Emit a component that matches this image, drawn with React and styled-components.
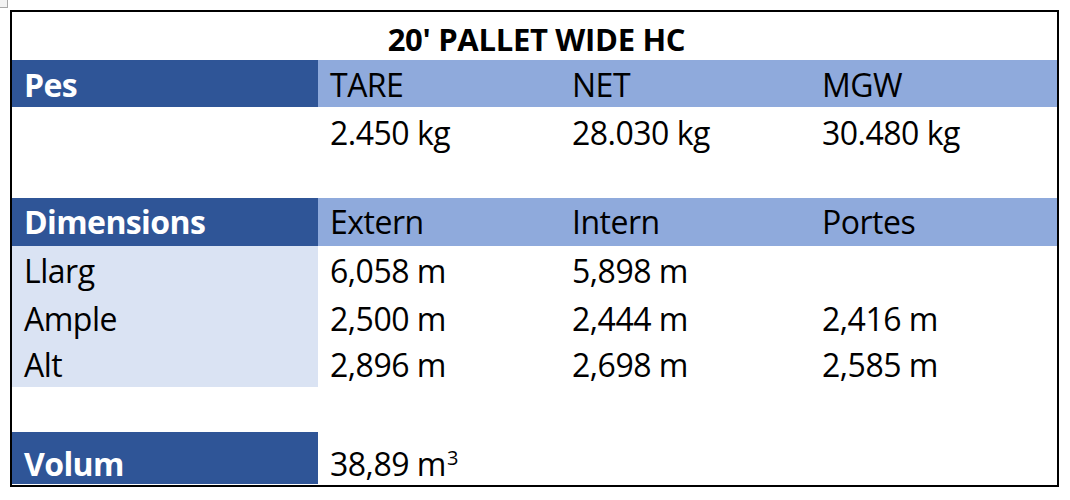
import React from "react";
import styled, { createGlobalStyle } from "styled-components";

const GlobalStyle = createGlobalStyle`
  html, body {
    margin: 0;
    padding: 0;
    background: #ffffff;
  }
  body {
    font-family: "Open Sans", "Liberation Sans", sans-serif;
    color: #000000;
  }
`;

const COLORS = {
  dark: "#2F5597",
  light: "#8FAADC",
  pale: "#DAE3F3",
  none: "transparent",
};

const Page = styled.div`
  position: relative;
  width: 1070px;
  height: 500px;
  padding: 10px;
  box-sizing: border-box;
`;

const CornerHandle = styled.div`
  position: absolute;
  left: 0;
  top: 0;
  width: 8px;
  height: 8px;
  box-sizing: border-box;
  background: #f3f3f3;
  border-right: 1px solid #a8a8a8;
  border-bottom: 1px solid #a8a8a8;
`;

const Sheet = styled.div`
  width: 1049px;
  height: 477px;
  box-sizing: border-box;
  border: 2px solid #000000;
  display: flex;
  flex-direction: column;
`;

const Row = styled.div`
  display: grid;
  grid-template-columns: 306px 242px 250px 1fr;
  height: ${(p) => p.$h}px;
  flex: none;
`;

const TitleRow = styled.div`
  height: 48px;
  flex: none;
  display: flex;
  align-items: flex-end;
  justify-content: center;
  padding: 0 0 5px 4px;
  box-sizing: border-box;
  font-weight: 700;
  font-size: 31px;
  line-height: 31px;
  letter-spacing: -0.3px;
`;

const Cell = styled.div`
  display: flex;
  align-items: flex-end;
  box-sizing: border-box;
  padding: 0 0 ${(p) => p.$pb}px 12px;
  background: ${(p) => COLORS[p.$bg || "none"]};
  color: ${(p) => (p.$bg === "dark" ? "#ffffff" : "#000000")};
  font-weight: ${(p) => (p.$bg === "dark" ? 700 : 400)};
  font-size: 32px;
  line-height: 32px;
  letter-spacing: ${(p) => (p.$bg === "dark" ? "-0.6px" : "-0.5px")};
  white-space: nowrap;
`;

const Unit = styled.span`
  display: inline-block;
`;

const Sup = styled.sup`
  font-size: 20px;
  line-height: 0;
  vertical-align: 11px;
  margin-left: 1px;
`;

const Spacer = styled.div`
  height: ${(p) => p.$h}px;
  flex: none;
`;

function DataRow({ h, pb, bgs, cells }) {
  return (
    <Row $h={h}>
      {cells.map((c, i) => (
        <Cell key={i} $pb={pb} $bg={bgs[i]}>
          {c}
        </Cell>
      ))}
    </Row>
  );
}

export default function App() {
  const headerBg = ["dark", "light", "light", "light"];
  const dimBg = ["pale", "none", "none", "none"];
  return (
    <Page>
      <GlobalStyle />
      <CornerHandle />
      <Sheet>
        <TitleRow>20' PALLET WIDE HC</TitleRow>
        <DataRow h={47} pb={6} bgs={headerBg} cells={["Pes", "TARE", "NET", "MGW"]} />
        <DataRow
          h={48}
          pb={6}
          bgs={["none", "none", "none", "none"]}
          cells={["", "2.450 kg", "28.030 kg", "30.480 kg"]}
        />
        <Spacer $h={43} />
        <DataRow
          h={48}
          pb={8}
          bgs={headerBg}
          cells={["Dimensions", "Extern", "Intern", "Portes"]}
        />
        <DataRow h={47} pb={6} bgs={dimBg} cells={["Llarg", "6,058 m", "5,898 m", ""]} />
        <DataRow h={48} pb={6} bgs={dimBg} cells={["Ample", "2,500 m", "2,444 m", "2,416 m"]} />
        <DataRow h={46} pb={6} bgs={dimBg} cells={["Alt", "2,896 m", "2,698 m", "2,585 m"]} />
        <Spacer $h={45} />
        <DataRow
          h={52}
          pb={4}
          bgs={["dark", "none", "none", "none"]}
          cells={[
            "Volum",
            <Unit key="v">
              38,89 m<Sup>3</Sup>
            </Unit>,
            "",
            "",
          ]}
        />
      </Sheet>
    </Page>
  );
}
